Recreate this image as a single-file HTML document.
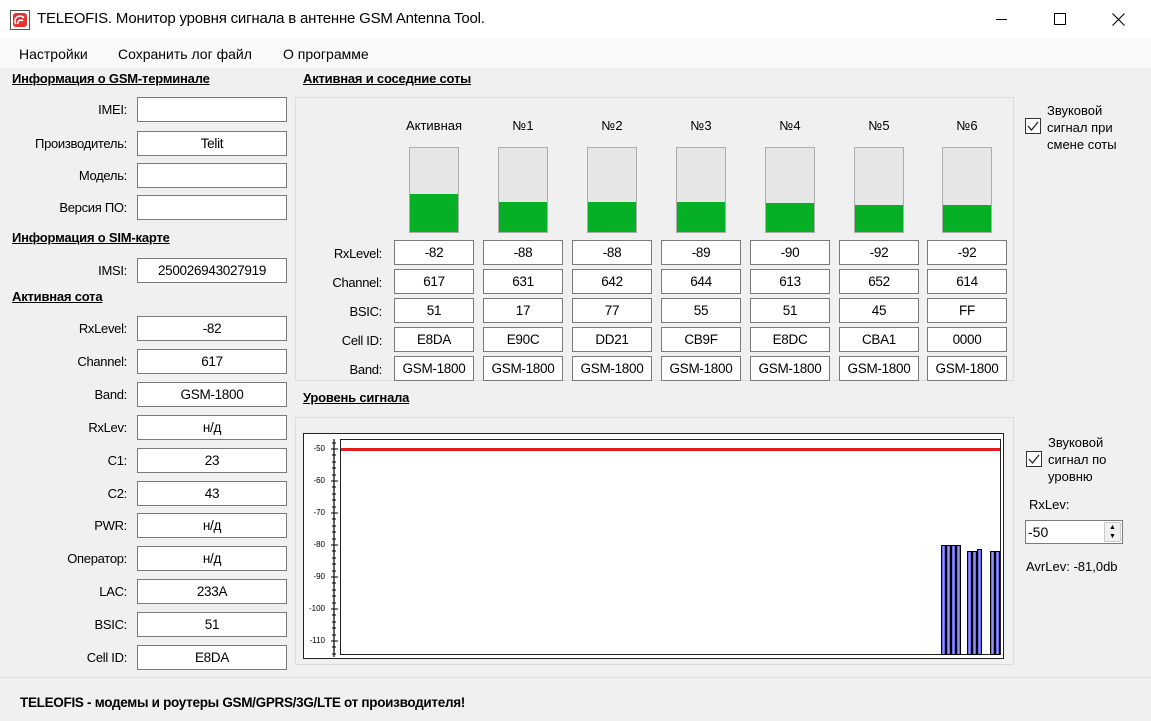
<!DOCTYPE html>
<html><head><meta charset="utf-8"><style>
*{box-sizing:border-box;margin:0;padding:0}
body{width:1151px;height:721px;background:#f0f0f0;font-family:"Liberation Sans","DejaVu Sans",sans-serif;font-size:13px;color:#000;position:relative;overflow:hidden}
.a{position:absolute}
.tb{left:0;top:0;width:1151px;height:38px;background:#fff}
.menu{left:0;top:38px;width:1151px;height:30px;background:#f9f9f9}
.lbl{text-align:right;width:125px;left:2px;font-size:13px;letter-spacing:-0.3px}
.box{background:#fff;border:1px solid #7a7a7a;height:25px;text-align:center;line-height:23px;font-size:13.5px;letter-spacing:-0.3px}
.hd{font-weight:bold;text-decoration:underline;font-size:13px;letter-spacing:-0.2px}
.panel{border:1px solid #dcdcdc}
.bar{width:50px;height:86px;background:#e6e6e6;border:1px solid #adadad}
.g{position:absolute;left:0;right:0;bottom:0;background:#06b025}
.chk{width:16px;height:16px;border:1px solid #333;background:#fff}
.yl{font-size:8px;width:30px;text-align:right;left:295px}
.b{border:1px solid #000;background:linear-gradient(90deg,#5050e0,#a0a0ff 50%,#5050e0);width:5px}
</style></head><body>
<div class="a tb"></div>
<svg class="a" style="left:10px;top:10px" width="20" height="20" viewBox="0 0 20 20"><rect x="0.5" y="0.5" width="19" height="19" fill="#fff" stroke="#555"/><rect x="3" y="3" width="14" height="14" rx="3" fill="#e53030"/><path d="M6 14a5 5 0 0 1 8-6M8 14a3 3 0 0 1 5-3" stroke="#fff" stroke-width="1.6" fill="none"/></svg>
<div class="a" style="left:37px;top:10px;font-size:15px;letter-spacing:-0.2px">TELEOFIS. Монитор уровня сигнала в антенне GSM Antenna Tool.</div>
<div class="a" style="left:996px;top:19px;width:11px;height:1px;background:#000"></div>
<div class="a" style="left:1054px;top:13px;width:12px;height:12px;border:1px solid #000"></div>
<svg class="a" style="left:1112px;top:13px" width="13" height="13"><path d="M0.5 0.5L12.5 12.5M12.5 0.5L0.5 12.5" stroke="#000" stroke-width="1.1"/></svg>
<div class="a menu"></div>
<div class="a" style="left:19px;top:46px;font-size:14px">Настройки</div>
<div class="a" style="left:118px;top:46px;font-size:14px">Сохранить лог файл</div>
<div class="a" style="left:283px;top:46px;font-size:14px">О программе</div>

<div class="a hd" style="left:12px;top:71px">Информация о GSM-терминале</div>
<div class="a lbl" style="top:102px">IMEI:</div><div class="a box" style="left:137px;top:97px;width:150px"></div>
<div class="a lbl" style="top:136px">Производитель:</div><div class="a box" style="left:137px;top:131px;width:150px">Telit</div>
<div class="a lbl" style="top:168px">Модель:</div><div class="a box" style="left:137px;top:163px;width:150px"></div>
<div class="a lbl" style="top:200px">Версия ПО:</div><div class="a box" style="left:137px;top:195px;width:150px"></div>
<div class="a hd" style="left:12px;top:230px">Информация о SIM-карте</div>
<div class="a lbl" style="top:263px">IMSI:</div><div class="a box" style="left:137px;top:258px;width:150px">250026943027919</div>
<div class="a hd" style="left:12px;top:289px">Активная сота</div>
<div class="a lbl" style="top:321px">RxLevel:</div><div class="a box" style="left:137px;top:316px;width:150px">-82</div>
<div class="a lbl" style="top:354px">Channel:</div><div class="a box" style="left:137px;top:349px;width:150px">617</div>
<div class="a lbl" style="top:387px">Band:</div><div class="a box" style="left:137px;top:382px;width:150px">GSM-1800</div>
<div class="a lbl" style="top:420px">RxLev:</div><div class="a box" style="left:137px;top:415px;width:150px">н/д</div>
<div class="a lbl" style="top:453px">C1:</div><div class="a box" style="left:137px;top:448px;width:150px">23</div>
<div class="a lbl" style="top:486px">C2:</div><div class="a box" style="left:137px;top:481px;width:150px">43</div>
<div class="a lbl" style="top:518px">PWR:</div><div class="a box" style="left:137px;top:513px;width:150px">н/д</div>
<div class="a lbl" style="top:551px">Оператор:</div><div class="a box" style="left:137px;top:546px;width:150px">н/д</div>
<div class="a lbl" style="top:584px">LAC:</div><div class="a box" style="left:137px;top:579px;width:150px">233A</div>
<div class="a lbl" style="top:617px">BSIC:</div><div class="a box" style="left:137px;top:612px;width:150px">51</div>
<div class="a lbl" style="top:650px">Cell ID:</div><div class="a box" style="left:137px;top:645px;width:150px">E8DA</div>

<div class="a hd" style="left:303px;top:71px">Активная и соседние соты</div>
<div class="a panel" style="left:295px;top:97px;width:719px;height:284px"></div>
<div class="a lbl" style="left:255px;width:127px;top:246px">RxLevel:</div>
<div class="a lbl" style="left:255px;width:127px;top:275px">Channel:</div>
<div class="a lbl" style="left:255px;width:127px;top:304px">BSIC:</div>
<div class="a lbl" style="left:255px;width:127px;top:333px">Cell ID:</div>
<div class="a lbl" style="left:255px;width:127px;top:362px">Band:</div>

<div class="a" style="left:394px;top:118px;width:80px;text-align:center">Активная</div>
<div class="a bar" style="left:409px;top:147px"><div class="g" style="height:38px"></div></div>
<div class="a box" style="left:394px;top:240px;width:80px">-82</div><div class="a box" style="left:394px;top:269px;width:80px">617</div><div class="a box" style="left:394px;top:298px;width:80px">51</div><div class="a box" style="left:394px;top:327px;width:80px">E8DA</div><div class="a box" style="left:394px;top:356px;width:80px">GSM-1800</div>

<div class="a" style="left:483px;top:118px;width:80px;text-align:center">№1</div>
<div class="a bar" style="left:498px;top:147px"><div class="g" style="height:30px"></div></div>
<div class="a box" style="left:483px;top:240px;width:80px">-88</div><div class="a box" style="left:483px;top:269px;width:80px">631</div><div class="a box" style="left:483px;top:298px;width:80px">17</div><div class="a box" style="left:483px;top:327px;width:80px">E90C</div><div class="a box" style="left:483px;top:356px;width:80px">GSM-1800</div>

<div class="a" style="left:572px;top:118px;width:80px;text-align:center">№2</div>
<div class="a bar" style="left:587px;top:147px"><div class="g" style="height:30px"></div></div>
<div class="a box" style="left:572px;top:240px;width:80px">-88</div><div class="a box" style="left:572px;top:269px;width:80px">642</div><div class="a box" style="left:572px;top:298px;width:80px">77</div><div class="a box" style="left:572px;top:327px;width:80px">DD21</div><div class="a box" style="left:572px;top:356px;width:80px">GSM-1800</div>

<div class="a" style="left:661px;top:118px;width:80px;text-align:center">№3</div>
<div class="a bar" style="left:676px;top:147px"><div class="g" style="height:30px"></div></div>
<div class="a box" style="left:661px;top:240px;width:80px">-89</div><div class="a box" style="left:661px;top:269px;width:80px">644</div><div class="a box" style="left:661px;top:298px;width:80px">55</div><div class="a box" style="left:661px;top:327px;width:80px">CB9F</div><div class="a box" style="left:661px;top:356px;width:80px">GSM-1800</div>

<div class="a" style="left:750px;top:118px;width:80px;text-align:center">№4</div>
<div class="a bar" style="left:765px;top:147px"><div class="g" style="height:29px"></div></div>
<div class="a box" style="left:750px;top:240px;width:80px">-90</div><div class="a box" style="left:750px;top:269px;width:80px">613</div><div class="a box" style="left:750px;top:298px;width:80px">51</div><div class="a box" style="left:750px;top:327px;width:80px">E8DC</div><div class="a box" style="left:750px;top:356px;width:80px">GSM-1800</div>

<div class="a" style="left:839px;top:118px;width:80px;text-align:center">№5</div>
<div class="a bar" style="left:854px;top:147px"><div class="g" style="height:27px"></div></div>
<div class="a box" style="left:839px;top:240px;width:80px">-92</div><div class="a box" style="left:839px;top:269px;width:80px">652</div><div class="a box" style="left:839px;top:298px;width:80px">45</div><div class="a box" style="left:839px;top:327px;width:80px">CBA1</div><div class="a box" style="left:839px;top:356px;width:80px">GSM-1800</div>

<div class="a" style="left:927px;top:118px;width:80px;text-align:center">№6</div>
<div class="a bar" style="left:942px;top:147px"><div class="g" style="height:27px"></div></div>
<div class="a box" style="left:927px;top:240px;width:80px">-92</div><div class="a box" style="left:927px;top:269px;width:80px">614</div><div class="a box" style="left:927px;top:298px;width:80px">FF</div><div class="a box" style="left:927px;top:327px;width:80px">0000</div><div class="a box" style="left:927px;top:356px;width:80px">GSM-1800</div>

<div class="a chk" style="left:1025px;top:118px"><svg width="14" height="14"><path d="M2 7l3.5 4L12 3" stroke="#222" stroke-width="1.3" fill="none"/></svg></div>
<div class="a" style="left:1047px;top:102px;line-height:17px;font-size:13px">Звуковой<br>сигнал при<br>смене соты</div>

<div class="a hd" style="left:303px;top:390px">Уровень сигнала</div>
<div class="a panel" style="left:295px;top:417px;width:719px;height:248px"></div>
<div class="a" style="left:303px;top:433px;width:701px;height:226px;border:1px solid #222;background:#fff"></div>
<div class="a" style="left:340px;top:439px;width:661px;height:216px;border:1px solid #222"></div>
<svg class="a" style="left:325px;top:436px" width="20" height="222">
<path d="M9 3V221" stroke="#000" stroke-width="1.2"/>
<path d="M6 13H13M6 45H13M6 77H13M6 109H13M6 141H13M6 173H13M6 205H13" stroke="#000"/>
<path d="M7 7H11M7 19H11M7 26H11M7 32H11M7 39H11M7 51H11M7 58H11M7 64H11M7 71H11M7 83H11M7 90H11M7 96H11M7 103H11M7 115H11M7 122H11M7 128H11M7 135H11M7 147H11M7 154H11M7 160H11M7 167H11M7 179H11M7 186H11M7 192H11M7 199H11M7 211H11M7 218H11" stroke="#000"/>
</svg>
<div class="a yl" style="top:444px">-50</div><div class="a yl" style="top:476px">-60</div><div class="a yl" style="top:508px">-70</div><div class="a yl" style="top:540px">-80</div><div class="a yl" style="top:572px">-90</div><div class="a yl" style="top:604px">-100</div><div class="a yl" style="top:636px">-110</div>
<div class="a" style="left:341px;top:448px;width:659px;height:3px;background:#e41c1c"></div>
<div class="a b" style="left:941px;top:545px;height:110px"></div><div class="a b" style="left:946px;top:545px;height:110px"></div><div class="a b" style="left:951px;top:545px;height:110px"></div><div class="a b" style="left:956px;top:545px;height:110px"></div>
<div class="a b" style="left:967px;top:551px;height:104px"></div><div class="a b" style="left:972px;top:551px;height:104px"></div><div class="a b" style="left:977px;top:549px;height:106px"></div>
<div class="a b" style="left:990px;top:551px;height:104px"></div><div class="a b" style="left:995px;top:551px;height:104px"></div>

<div class="a chk" style="left:1026px;top:451px"><svg width="14" height="14"><path d="M2 7l3.5 4L12 3" stroke="#222" stroke-width="1.3" fill="none"/></svg></div>
<div class="a" style="left:1048px;top:434px;line-height:17px;font-size:13px">Звуковой<br>сигнал по<br>уровню</div>
<div class="a" style="left:1029px;top:497px">RxLev:</div>
<div class="a" style="left:1025px;top:520px;width:98px;height:24px;border:1px solid #7a7a7a;background:#fff;padding-left:2px;line-height:22px;font-size:14px">-50</div>
<div class="a" style="left:1104px;top:522px;width:17px;height:20px;background:#f0f0f0;border:1px solid #ccc;font-size:7px;line-height:9px;text-align:center">▲<br>▼</div>
<div class="a" style="left:1026px;top:559px">AvrLev: -81,0db</div>

<div class="a" style="left:0;top:677px;width:1151px;height:44px;background:#f0f0f0;border-top:1px solid #dcdcdc"></div>
<div class="a" style="left:20px;top:695px;font-weight:bold;font-size:13.5px;letter-spacing:-0.3px">TELEOFIS - модемы и роутеры GSM/GPRS/3G/LTE от производителя!</div>
</body></html>
